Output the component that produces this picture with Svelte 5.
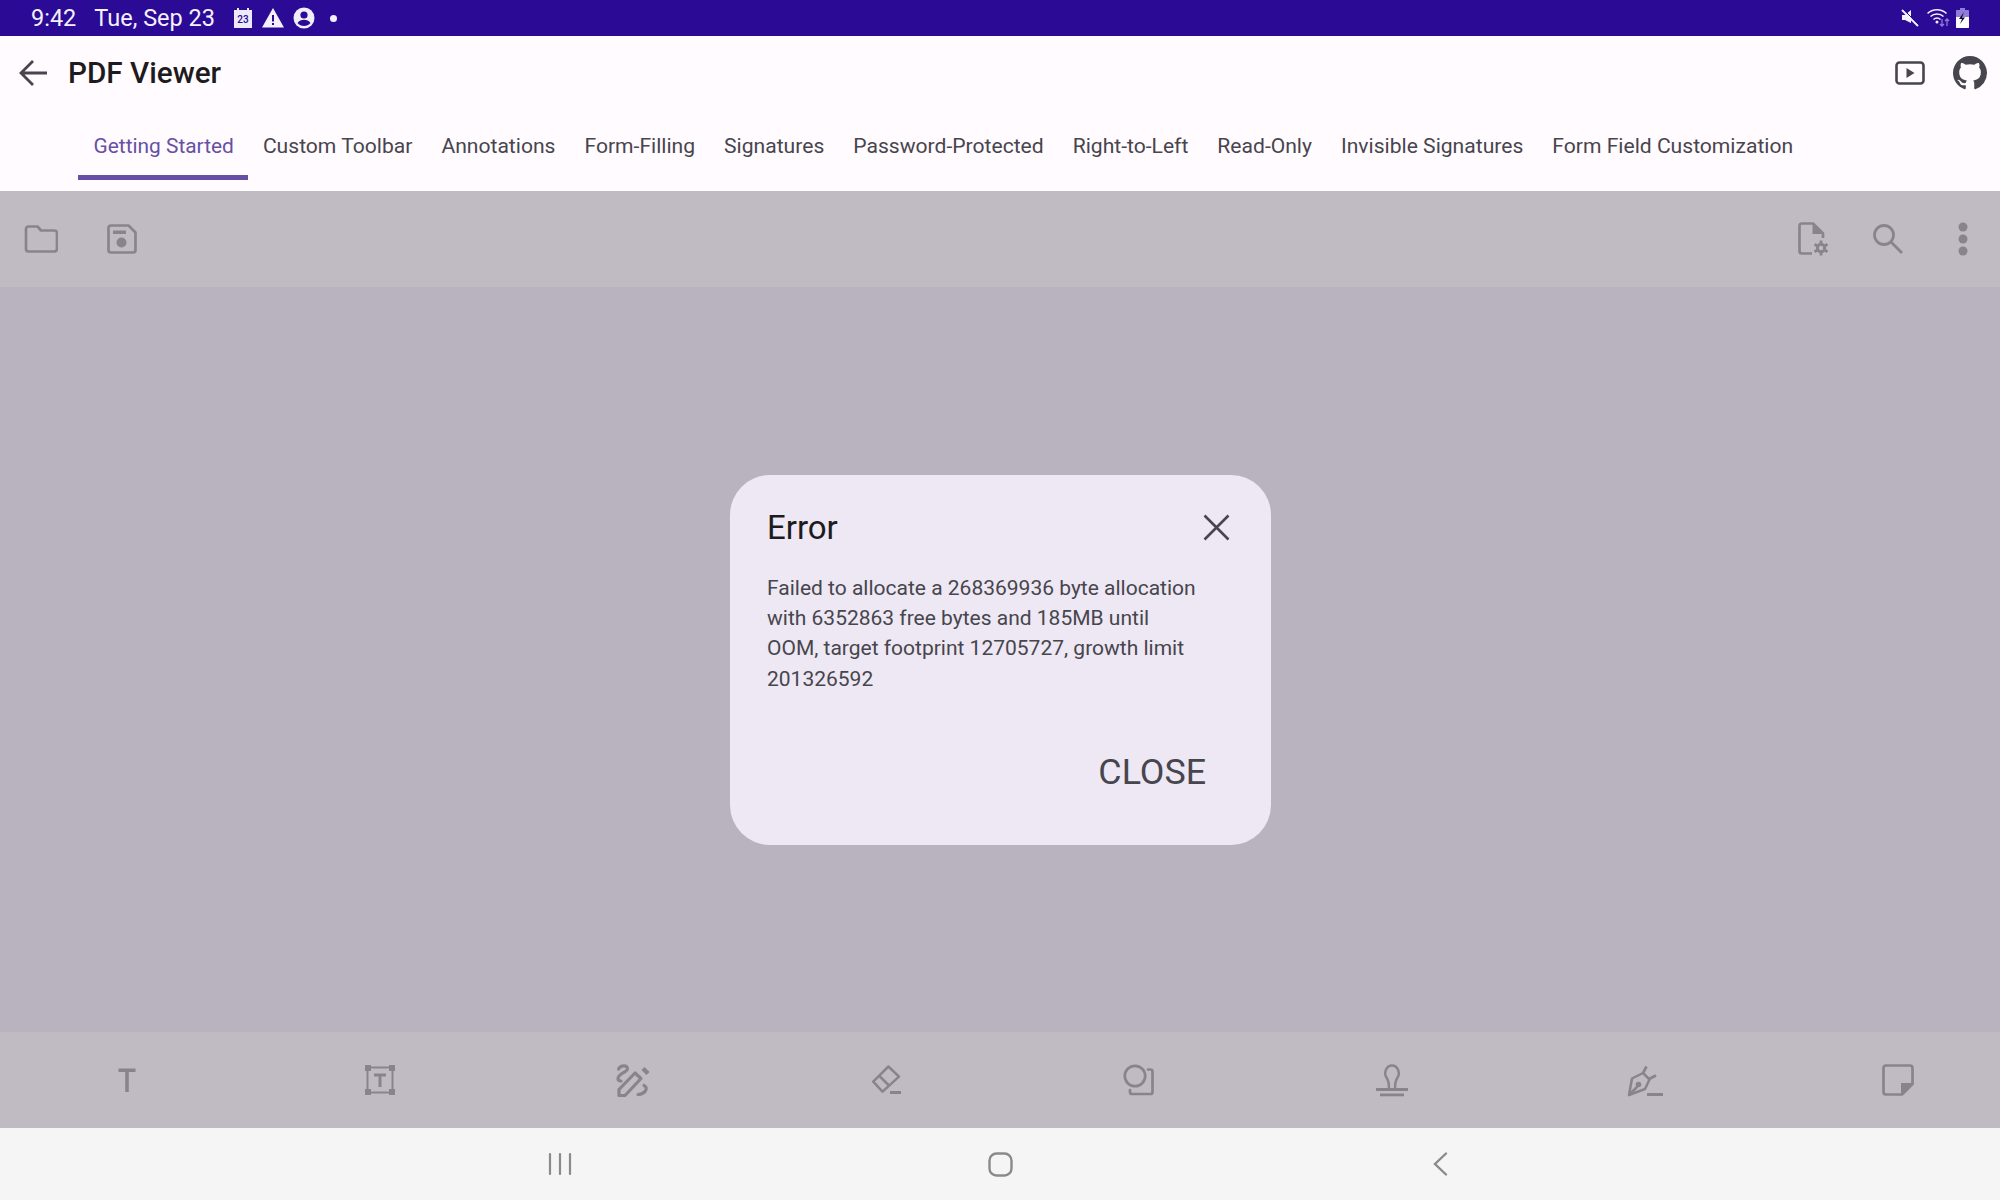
<script>
    const tabs = [
        "Getting Started",
        "Custom Toolbar",
        "Annotations",
        "Form-Filling",
        "Signatures",
        "Password-Protected",
        "Right-to-Left",
        "Read-Only",
        "Invisible Signatures",
        "Form Field Customization",
    ];
    let active = 0;
</script>

<div class="screen">
    <div class="status">
        <div class="status-left">
            <span class="time">9:42</span>
            <span class="date">Tue, Sep 23</span>
            <svg class="s-cal" width="20" height="22" viewBox="0 0 20 22">
                <path fill="#eeeafb" d="M1 3h3V1h2v2h8V1h2v2h3v18H1z" />
                <text x="10" y="16" text-anchor="middle" class="cal-num">23</text>
            </svg>
            <svg class="s-warn" width="22" height="20" viewBox="0 0 22 20">
                <path fill="#f4f1fc" d="M11 0 22 19.500H0z" />
                <path fill="#2b0a96" d="M10 7h2v6.500h-2zM10 15h2v2h-2z" />
            </svg>
            <svg class="s-acc" width="22" height="22" viewBox="0 0 22 22">
                <circle cx="11" cy="11" r="10.500" fill="#f1edfb" />
                <circle cx="11" cy="8" r="3.600" fill="#2b0a96" />
                <path fill="#2b0a96" d="M4.500 16c1.500-2.500 4-3.200 6.500-3.200s5 .7 6.500 3.200c-1.600 1.900-3.900 3-6.500 3s-4.900-1.100-6.500-3z" />
            </svg>
            <span class="dot"></span>
        </div>
        <div class="status-right">
            <svg width="18" height="18" viewBox="0 0 18 18">
                <path fill="#f4f1fc" d="M1 6h3l6-5v13L4 11H1z" />
                <path stroke="#f4f1fc" stroke-width="2" d="M1 1l16 16" />
                <path stroke="#2b0a96" stroke-width="1" d="M2.500 0.500l16 16" />
            </svg>
            <svg class="s-wifi" width="24" height="20" viewBox="0 0 24 20">
                <g fill="none" stroke="#f4f1fc" stroke-width="1.500">
                    <path d="M0.500 5.500C5.500 0.500 14.500 0.500 19.500 5.500" />
                    <path d="M3.500 8.500C7 5 13 5 16.500 8.500" />
                    <path d="M6.500 11.500C8.500 9.500 11.500 9.500 13.500 11.500" />
                </g>
                <circle cx="10" cy="14" r="1.500" fill="#f4f1fc" />
                <path fill="none" stroke="#8f7bd8" stroke-width="1.300" d="M15 11v7M13 16l2 2 2-2M20 18v-7M18 13l2-2 2 2" />
            </svg>
            <svg class="s-batt" width="13" height="20" viewBox="0 0 13 20">
                <path fill="#8f7bd8" d="M4 0h5v2h3c.600 0 1 .400 1 1v6H0V3c0-.600.400-1 1-1h3z" />
                <path fill="#fdfcff" d="M0 9h13v10c0 .600-.400 1-1 1H1c-.600 0-1-.400-1-1z" />
                <path fill="#120a30" d="M8 4 3 11h3l-2 5 5-6.500H6z" />
            </svg>
        </div>
    </div>

    <div class="appbar">
        <svg class="back" width="29" height="28" viewBox="0 0 29 28">
            <path fill="none" stroke="#47454d" stroke-width="2.800" d="M29 14H2.500M15 2 3 14l12 12" />
        </svg>
        <span class="title">PDF Viewer</span>
        <svg class="yt" width="30" height="24" viewBox="0 0 30 24">
            <rect x="1.500" y="1.500" width="27" height="21" rx="3" fill="none" stroke="#47454d" stroke-width="2.600" />
            <path fill="#47454d" d="M11.500 7v10l8-5z" />
        </svg>
        <svg class="gh" width="34" height="34" viewBox="0 0 16 16">
            <path fill="#47454d" d="M8 0C3.580 0 0 3.580 0 8c0 3.540 2.290 6.530 5.470 7.590.4.070.55-.17.55-.38 0-.19-.01-.82-.01-1.490-2.010.37-2.530-.49-2.690-.94-.09-.23-.48-.94-.82-1.130-.28-.15-.68-.52-.01-.53.630-.01 1.080.58 1.230.82.720 1.210 1.870.870 2.330.660.070-.520.280-.870.510-1.070-1.780-.2-3.640-.890-3.640-3.950 0-.870.310-1.590.820-2.150-.08-.2-.36-1.020.08-2.120 0 0 .67-.210 2.200.820.640-.18 1.320-.27 2-.27s1.360.09 2 .27c1.530-1.040 2.200-.82 2.200-.82.440 1.100.16 1.920.08 2.120.51.560.82 1.270.82 2.150 0 3.070-1.870 3.750-3.650 3.950.29.250.54.730.54 1.480 0 1.070-.01 1.930-.01 2.200 0 .21.150.46.550.38A8.013 8.013 0 0 0 16 8c0-4.420-3.580-8-8-8z" />
        </svg>
    </div>

    <nav class="tabs">
        {#each tabs as tab, i}
            <div class="tab" class:active={i === active}>{tab}</div>
        {/each}
    </nav>

    <div class="toolbar top">
        <svg class="t-folder" width="34" height="28" viewBox="0 0 34 28">
            <path fill="none" stroke="#89848b" stroke-width="2.700" stroke-linejoin="round" d="M2 4c0-1 .8-2.500 2.500-2.500h9l3.500 4h13c1.500 0 3 1 3 2.500v16c0 1.500-1.500 2.500-3 2.500H4.500c-1.500 0-2.500-1-2.500-2.500z" />
        </svg>
        <svg class="t-save" width="30" height="30" viewBox="0 0 30 30">
            <path fill="none" stroke="#89848b" stroke-width="2.700" stroke-linejoin="round" d="M1.500 4c0-1.500 1-2.500 2.500-2.500h17.500l7 7V26c0 1.500-1 2.500-2.500 2.500H4c-1.500 0-2.500-1-2.500-2.500z" />
            <rect x="6" y="6.500" width="13" height="3.500" fill="#89848b" />
            <circle cx="14.500" cy="18.500" r="5" fill="#89848b" />
        </svg>
        <span class="grow"></span>
        <svg class="t-doc" width="34" height="34" viewBox="0 0 34 34">
            <path fill="none" stroke="#89848b" stroke-width="2.700" stroke-linejoin="round" d="M15 31.500H5c-1.500 0-2.500-1-2.500-2.500V4c0-1.500 1-2.500 2.500-2.500h11L26 11.500V16" />
            <path fill="#89848b" d="M15.500 1.500 26 12H15.500z" />
            <path stroke="#89848b" stroke-width="2.800" d="M24 18.500v15M17.500 22.250 30.500 29.750M17.500 29.750 30.500 22.250" />
            <circle cx="24" cy="26" r="5.200" fill="#89848b" />
            <circle cx="24" cy="26" r="2.200" fill="#c0bbc2" />
        </svg>
        <svg class="t-search" width="32" height="32" viewBox="0 0 32 32">
            <circle cx="12" cy="12" r="9.500" fill="none" stroke="#89848b" stroke-width="2.800" />
            <path stroke="#89848b" stroke-width="2.800" d="M19 19 30 30" />
        </svg>
        <svg class="t-more" width="10" height="34" viewBox="0 0 10 34">
            <circle cx="5" cy="5" r="4.500" fill="#89848b" />
            <circle cx="5" cy="17" r="4.500" fill="#89848b" />
            <circle cx="5" cy="29" r="4.500" fill="#89848b" />
        </svg>
    </div>

    <main class="content">
        <div class="dialog">
            <div class="dialog-head">
                <span class="dialog-title">Error</span>
                <svg width="27" height="27" viewBox="0 0 27 27">
                    <path stroke="#47454d" stroke-width="2.600" d="M1.500 1.500 25.500 25.500M25.500 1.500 1.500 25.500" />
                </svg>
            </div>
            <p class="dialog-text">Failed to allocate a 268369936 byte allocation with 6352863 free bytes and 185MB until OOM, target footprint 12705727, growth limit 201326592</p>
            <div class="dialog-actions"><span class="close">CLOSE</span></div>
        </div>
    </main>

    <div class="toolbar bottom">
        <svg width="36" height="36" viewBox="0 0 36 36">
            <path fill="#89848b" d="M9.500 6.500h17v3.500h-6.700v20h-3.600V10H9.500z" />
        </svg>
        <svg width="36" height="36" viewBox="0 0 36 36">
            <g fill="#89848b">
                <rect x="3" y="3" width="6" height="6" /><rect x="27" y="3" width="6" height="6" />
                <rect x="3" y="27" width="6" height="6" /><rect x="27" y="27" width="6" height="6" />
                <path d="M12 11.500h12v3h-4.500V25h-3V14.500H12z" />
            </g>
            <rect x="5.500" y="5.500" width="25" height="25" fill="none" stroke="#89848b" stroke-width="2" />
        </svg>
        <svg width="36" height="36" viewBox="0 0 36 36">
            <g fill="none" stroke="#89848b" stroke-width="3.200">
                <path d="M4 33.500v-6L20 11l6 5.500L10 33.500z" stroke-linejoin="round" />
                <path d="M3.500 7C6 2.500 13 3 12.500 7 12 10 3 12 3 16.500c0 1.500 1 2.500 3 2.500" stroke-linecap="round" />
                <path d="M29 23.500c2.500 1 3 4 1 6-1.500 1.500-5 3-7 3" stroke-linecap="round" />
                <path d="M28 6.500 33 11.500" stroke-width="4.500" />
            </g>
        </svg>
        <svg width="36" height="36" viewBox="0 0 36 36">
            <g fill="none" stroke="#89848b" stroke-width="2.500" stroke-linejoin="round">
                <path d="M20.400 4.500 31 14.700 14.500 29.700 5.200 19.700z" />
                <path d="M11.900 14.500 21.500 24" />
            </g>
            <rect x="22" y="29" width="11" height="3" fill="#89848b" />
        </svg>
        <svg width="36" height="36" viewBox="0 0 36 36">
            <circle cx="14" cy="14" r="10.200" fill="none" stroke="#89848b" stroke-width="2.700" />
            <path fill="none" stroke="#89848b" stroke-width="2.700" stroke-linecap="round" d="M27 7.500h2.500c1.200 0 2 .8 2 2V30c0 1.200-.8 2-2 2H11c-1.200 0-2-.8-2-2v-2" />
        </svg>
        <svg width="36" height="36" viewBox="0 0 36 36">
            <path fill="none" stroke="#89848b" stroke-width="2.500" d="M15 26.500c0-6-.5-8-2.500-11-3-4-.5-12 5.500-12s8.500 8 5.500 12c-2 3-2.500 5-2.500 11" />
            <rect x="2" y="26" width="32" height="3" fill="#89848b" />
            <rect x="6" y="31.500" width="24" height="2.800" fill="#89848b" />
        </svg>
        <svg width="36" height="36" viewBox="0 0 36 36">
            <g fill="none" stroke="#89848b" stroke-width="2.500" stroke-linejoin="round">
                <path d="M2 33 5 16.500 16 11l6.500 6.500L18 27z" />
                <path d="M2 33 10.500 24.500" />
                <path d="M16 11 19.500 4.500M22 17l7-3.500" stroke-width="2.700" />
            </g>
            <circle cx="11.500" cy="22.500" r="2.800" fill="#89848b" />
            <rect x="20" y="31" width="16" height="3" fill="#89848b" />
        </svg>
        <svg width="36" height="36" viewBox="0 0 36 36">
            <path fill="none" stroke="#89848b" stroke-width="2.700" stroke-linejoin="round" d="M3.500 6c0-1.500 1-2.500 2.500-2.500h24c1.500 0 2.500 1 2.500 2.500v16L22 32.500H6c-1.500 0-2.500-1-2.500-2.500z" />
            <path fill="#89848b" d="M21 21h12L21 33z" />
        </svg>
    </div>

    <div class="navbar">
        <svg class="n-recent" width="24" height="24" viewBox="0 0 24 24">
            <path stroke="#8a8a8a" stroke-width="2.200" stroke-linecap="round" d="M2 2v20M12 2v20M22 2v20" />
        </svg>
        <svg class="n-home" width="25" height="25" viewBox="0 0 25 25">
            <rect x="1.500" y="1.500" width="22" height="22" rx="7" fill="none" stroke="#8a8a8a" stroke-width="2.400" />
        </svg>
        <svg class="n-back" width="16" height="24" viewBox="0 0 16 24">
            <path fill="none" stroke="#8a8a8a" stroke-width="2.400" stroke-linecap="round" d="M14 1.500 3 12l11 10.500" />
        </svg>
    </div>
</div>

<style>
    :global(body) {
        margin: 0;
    }

    .screen {
        width: 2000px;
        height: 1200px;
        display: flex;
        flex-direction: column;
        font-family: Roboto, "Liberation Sans", sans-serif;
        overflow: hidden;
    }

    .status {
        height: 36px;
        flex: none;
        background: #2b0a96;
        color: #f4f1fc;
        display: flex;
        align-items: center;
        justify-content: space-between;
        padding: 0 31px 0 31px;
        font-size: 23.500px;
    }

    .status-left {
        display: flex;
        align-items: center;
    }

    .time {
        margin-right: 18px;
    }

    .date {
        margin-right: 18px;
    }

    .status svg {
        display: block;
    }

    .s-warn {
        margin-left: 9px;
    }

    .s-acc {
        margin-left: 9px;
    }

    .cal-num {
        font-size: 10px;
        font-weight: 500;
        fill: #2b0a96;
    }

    .dot {
        width: 7px;
        height: 7px;
        border-radius: 50%;
        background: #f4f1fc;
        margin-left: 15px;
    }

    .status-right {
        display: flex;
        align-items: center;
        gap: 8px;
    }

    .s-batt {
        margin-left: -2.500px;
    }

    .appbar {
        height: 73px;
        flex: none;
        background: #fffbfe;
        display: flex;
        align-items: center;
        padding: 0 13px 0 18px;
    }

    .title {
        font-size: 29.700px;
        font-weight: 500;
        color: #1d1b20;
        margin-left: 21px;
        flex: 1;
    }

    .gh {
        margin-left: 28px;
    }

    .tabs {
        height: 82px;
        flex: none;
        box-sizing: border-box;
        background: #fffbfe;
        display: flex;
        padding: 0 0 0 78px;
    }

    .tab {
        height: 71px;
        padding: 2px 14.500px 0;
        box-sizing: border-box;
        display: flex;
        align-items: center;
        font-size: 21.100px;
        font-weight: 450;
        color: #47454d;
        white-space: nowrap;
        border-radius: 3px 3px 0 0;
    }

    .tab.active {
        color: #6750a4;
        font-size: 20.900px;
        padding-left: 15.500px;
        padding-right: 14.500px;
        box-shadow: inset 0 -5px 0 #6750a4;
    }

    .toolbar {
        height: 96px;
        flex: none;
        background: #c0bbc2;
        display: flex;
        align-items: center;
    }

    .top {
        padding: 0 32px 0 24px;
    }

    .t-save {
        margin-left: 49px;
    }

    .grow {
        flex: 1;
    }

    .t-search {
        margin-left: 41px;
    }

    .t-more {
        margin-left: 54px;
    }

    .bottom {
        justify-content: space-between;
        padding: 0 84px 0 109px;
    }

    .content {
        flex: 1;
        background: #b8b3be;
        display: flex;
        align-items: center;
        justify-content: center;
    }

    .dialog {
        width: 541px;
        height: 370px;
        box-sizing: border-box;
        background: #ede8f3;
        border-radius: 40px;
        padding: 34px 37.500px 0;
        display: flex;
        flex-direction: column;
    }

    .dialog-head {
        display: flex;
        align-items: center;
        justify-content: space-between;
        height: 38px;
        margin-right: 3px;
    }

    .dialog-title {
        font-size: 33px;
        color: #1d1b20;
    }

    .dialog-text {
        margin: 26px 0 0;
        max-width: 432px;
        font-size: 21px;
        line-height: 30.400px;
        color: #47454d;
    }

    .dialog-actions {
        margin-top: auto;
        margin-bottom: 52px;
        text-align: right;
        padding-right: 27px;
    }

    .close {
        font-size: 35.800px;
        color: #47454d;
    }

    .navbar {
        height: 72px;
        flex: none;
        background: #f5f5f5;
        display: flex;
        align-items: center;
        padding-left: 548px;
    }

    .n-home {
        margin-left: 416px;
    }

    .n-back {
        margin-left: 419px;
    }
</style>
